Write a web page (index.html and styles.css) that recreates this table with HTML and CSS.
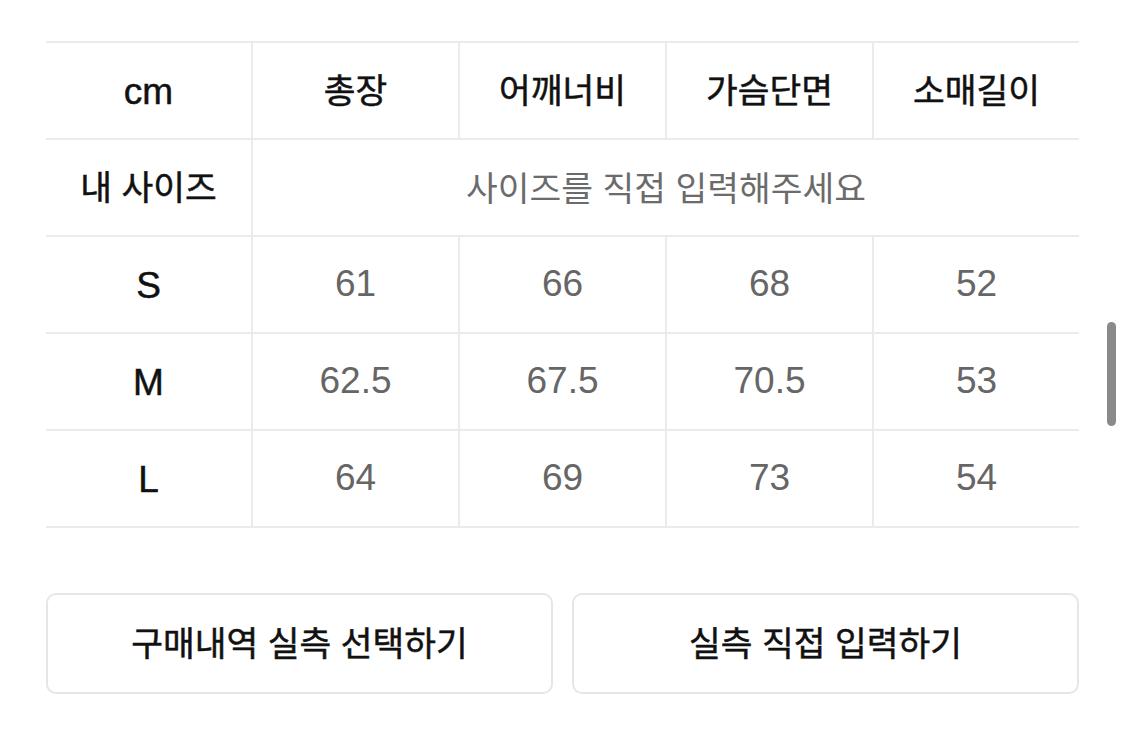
FILE: index.html
```html
<!DOCTYPE html>
<html lang="ko">
<head>
<meta charset="utf-8">
<link rel="stylesheet" href="styles.css">
</head>
<body>
<div class="page">
  <div class="size-table">
    <div class="cell head latin">cm</div>
    <div class="cell head ko">총장</div>
    <div class="cell head ko">어깨너비</div>
    <div class="cell head ko">가슴단면</div>
    <div class="cell head ko">소매길이</div>

    <div class="cell head ko">내 사이즈</div>
    <div class="cell hint ko span4">사이즈를 직접 입력해주세요</div>

    <div class="cell head latin">S</div>
    <div class="cell val">61</div>
    <div class="cell val">66</div>
    <div class="cell val">68</div>
    <div class="cell val">52</div>

    <div class="cell head latin">M</div>
    <div class="cell val">62.5</div>
    <div class="cell val">67.5</div>
    <div class="cell val">70.5</div>
    <div class="cell val">53</div>

    <div class="cell head latin">L</div>
    <div class="cell val">64</div>
    <div class="cell val">69</div>
    <div class="cell val">73</div>
    <div class="cell val">54</div>
  </div>

  <div class="actions">
    <button class="btn">구매내역 실측 선택하기</button>
    <button class="btn">실측 직접 입력하기</button>
  </div>
</div>
<div class="scrollbar"></div>
</body>
</html>
```

FILE: styles.css
```css
html, body {
  margin: 0;
  padding: 0;
  background: #ffffff;
}
body {
  width: 1125px;
  height: 732px;
  overflow: hidden;
  position: relative;
  font-family: "Liberation Sans", "Noto Sans CJK KR", sans-serif;
}
.page {
  padding: 41px 46px 0 46px;
}
.size-table {
  display: grid;
  grid-template-columns: repeat(5, 1fr);
  grid-auto-rows: 95px;
  gap: 2px;
  padding: 2px 0;
  background: #ebebeb;
}
.cell {
  background: #ffffff;
  display: flex;
  align-items: center;
  justify-content: center;
  font-size: 37px;
  font-weight: 400;
  color: #666666;
}
.ko {
  font-size: 34.5px;
  padding-bottom: 6px;
}
.head {
  color: #111111;
  -webkit-text-stroke: 0.5px #111111;
}
.latin {
  padding-top: 2px;
}
.span4 {
  grid-column: span 4;
}
.hint {
  color: #6b6b6b;
  padding-bottom: 3px;
}
.val {
  color: #666666;
  padding-bottom: 2px;
}
.actions {
  display: flex;
  gap: 19px;
  margin-top: 65px;
}
.btn {
  flex: 1;
  height: 101px;
  background: #ffffff;
  border: 2px solid #e6e6e6;
  border-radius: 10px;
  font-family: "Liberation Sans", "Noto Sans CJK KR", sans-serif;
  font-size: 34.5px;
  font-weight: 400;
  color: #111111;
  -webkit-text-stroke: 0.5px #111111;
  padding: 0 0 6px 0;
}
.scrollbar {
  position: absolute;
  left: 1107px;
  top: 322px;
  width: 9px;
  height: 104px;
  border-radius: 5px;
  background: #8a8a8a;
}
```
